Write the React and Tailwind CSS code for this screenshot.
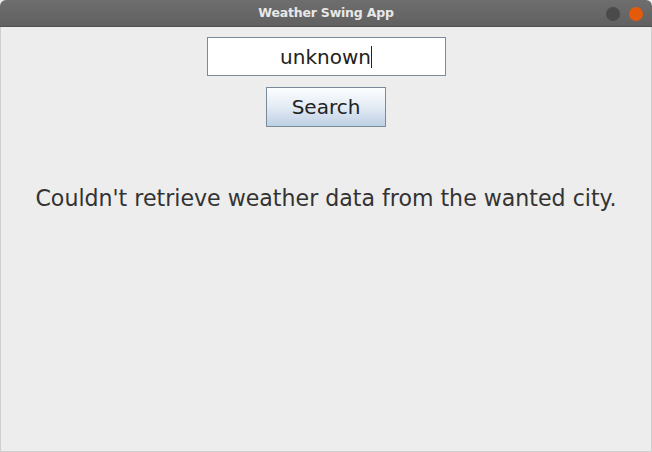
import React from 'react';

export default function App() {
  return (
    <div className="w-[652px] h-[452px] flex flex-col bg-[#ededed] overflow-hidden" style={{ fontFamily: '"DejaVu Sans", sans-serif' }}>
      <div className="h-[27px] shrink-0 rounded-t-[6px] bg-gradient-to-b from-[#6e6e6e] to-[#616161] flex items-center justify-center relative border-b border-[#505050]">
        <span className="text-[12.5px] font-bold text-[#e8e8e8] tracking-[-0.2px]">Weather Swing App</span>
        <div className="absolute right-[9px] top-[7px] flex gap-[9px]">
          <div className="w-[14px] h-[14px] rounded-full bg-[#4a4a4a]" />
          <div className="w-[14px] h-[14px] rounded-full bg-[#e35b0a]" />
        </div>
      </div>
      <div className="flex-1 flex flex-col items-center border-x border-b border-[#d0d0d0]">
        <div className="mt-[10px] w-[239px] h-[39px] bg-white border border-[#7a8a99] flex items-center justify-center">
          <span className="text-[20px] text-[#222] leading-none">unknown</span>
          <span className="w-px h-[22px] bg-[#222]" />
        </div>
        <button className="mt-[11px] w-[120px] h-[40px] border border-[#7a8a99] bg-gradient-to-b from-[#fdfeff] via-[#e3ebf4] to-[#bed0e4] text-[20px] text-[#222]">
          Search
        </button>
        <div className="mt-[56px] text-[22.1px] text-[#333] text-center leading-[30px]">
          Couldn't retrieve weather data from the wanted city.
        </div>
      </div>
    </div>
  );
}
